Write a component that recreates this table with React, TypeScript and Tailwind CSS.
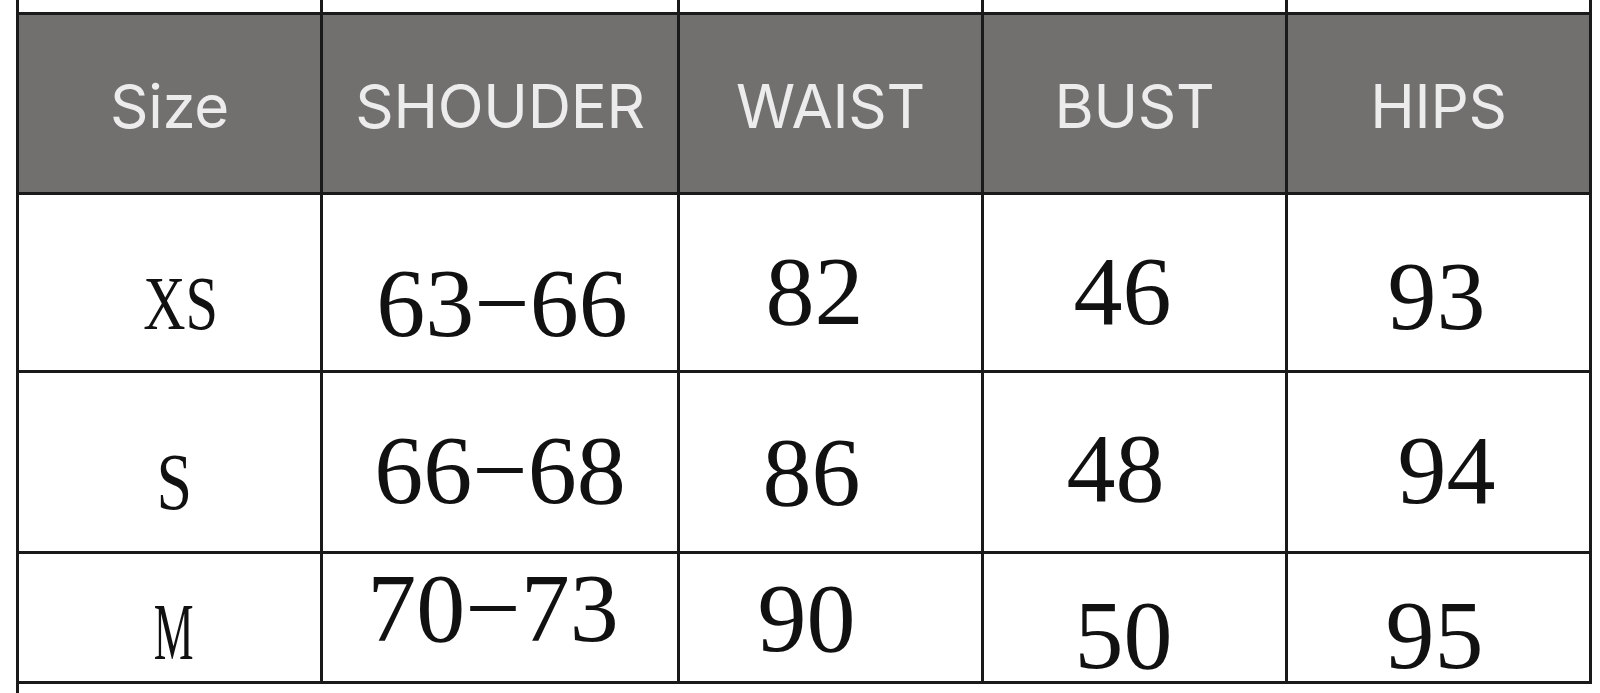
import React from 'react';

interface Cell {
  text: string;
  cls: string; // padding shifts and font tweaks, written out in full
}

const headers = ['Size', 'SHOUDER', 'WAIST', 'BUST', 'HIPS'];

const rows: Array<{ height: string; cells: Cell[] }> = [
  {
    height: 'h-[178px]',
    cells: [
      { text: 'XS', cls: 'pt-[40px] pl-[22px] text-[76px] scale-x-[0.77]' },
      { text: '63−66', cls: 'pt-[40px] pl-[4px]' },
      { text: '82', cls: 'pt-[16px] pr-[32px]' },
      { text: '46', cls: 'pt-[16px] pr-[24px]' },
      { text: '93', cls: 'pt-[26px] pr-[4px]' },
    ],
  },
  {
    height: 'h-[181px]',
    cells: [
      { text: 'S', cls: 'pt-[40px] pl-[10px] text-[80px] scale-x-[0.8]' },
      { text: '66−68', cls: 'pt-[16px]' },
      { text: '86', cls: 'pt-[20px] pr-[38px]' },
      { text: '48', cls: 'pt-[12px] pr-[38px]' },
      { text: '94', cls: 'pt-[16px] pl-[16px]' },
    ],
  },
  {
    height: 'h-[130px]',
    cells: [
      { text: 'M', cls: 'pt-[28px] pl-[8px] text-[80px] scale-x-[0.56]' },
      { text: '70−73', cls: 'pb-[20px] pr-[14px]' },
      { text: '90', cls: 'pr-[48px]' },
      { text: '50', cls: 'pt-[34px] pr-[22px]' },
      { text: '95', cls: 'pt-[34px] pr-[8px]' },
    ],
  },
];

const line = 'border-[#1a1a1a]';

const SizeChart: React.FC = () => {
  return (
    <div className="w-[1600px] h-[693px] bg-white overflow-hidden">
      <div className={`ml-[16px] h-[693px] border-l-[3px] ${line} flex flex-col`}>
        {/* column lines running off the top edge */}
        <div className="grid grid-cols-[304px_357px_304px_304px_304px] h-[12px]">
          {headers.map((h) => (
            <div key={h} className={`border-r-[3px] ${line}`} />
          ))}
        </div>

        {/* header row */}
        <div className="grid grid-cols-[304px_357px_304px_304px_304px] h-[183px]">
          {headers.map((h) => (
            <div
              key={h}
              className={`border-t-[3px] border-b-[3px] border-r-[3px] ${line} bg-[#71706f] flex items-center justify-center pt-[5px]`}
            >
              <span className="font-['Inter',sans-serif] text-[60px] leading-none text-[#ececec] tracking-[-0.3px]">
                {h}
              </span>
            </div>
          ))}
        </div>

        {/* body rows */}
        {rows.map((row, ri) => (
          <div key={ri} className={`grid grid-cols-[304px_357px_304px_304px_304px] ${row.height}`}>
            {row.cells.map((c, ci) => (
              <div
                key={ci}
                className={`border-b-[3px] border-r-[3px] ${line} flex items-center justify-center ${c.cls.split(' ').filter((k) => k.startsWith('p')).join(' ')}`}
              >
                <span
                  className={`inline-block whitespace-nowrap font-['Liberation_Serif',serif] leading-[80px] text-[#111111] ${
                    ci === 0
                      ? c.cls.split(' ').filter((k) => !k.startsWith('p')).join(' ')
                      : 'text-[98px]'
                  }`}
                >
                  {c.text}
                </span>
              </div>
            ))}
          </div>
        ))}
      </div>
    </div>
  );
};

export default function App() {
  return <SizeChart />;
}
